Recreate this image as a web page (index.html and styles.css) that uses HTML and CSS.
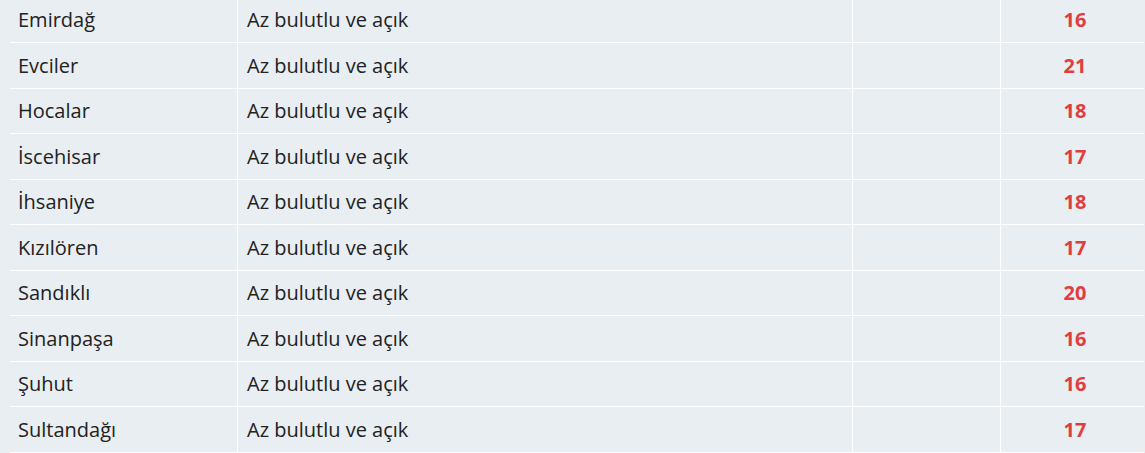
FILE: index.html
```html
<!DOCTYPE html>
<html lang="tr">
<head>
<meta charset="utf-8">
<link rel="stylesheet" href="styles.css">
</head>
<body>
<div class="wrap">
<table class="weather">
<tbody>
<tr><td class="c-name">Emirdağ</td><td class="c-desc">Az bulutlu ve açık</td><td class="c-empty"></td><td class="c-temp">16</td></tr>
<tr><td class="c-name">Evciler</td><td class="c-desc">Az bulutlu ve açık</td><td class="c-empty"></td><td class="c-temp">21</td></tr>
<tr><td class="c-name">Hocalar</td><td class="c-desc">Az bulutlu ve açık</td><td class="c-empty"></td><td class="c-temp">18</td></tr>
<tr><td class="c-name">İscehisar</td><td class="c-desc">Az bulutlu ve açık</td><td class="c-empty"></td><td class="c-temp">17</td></tr>
<tr><td class="c-name">İhsaniye</td><td class="c-desc">Az bulutlu ve açık</td><td class="c-empty"></td><td class="c-temp">18</td></tr>
<tr><td class="c-name">Kızılören</td><td class="c-desc">Az bulutlu ve açık</td><td class="c-empty"></td><td class="c-temp">17</td></tr>
<tr><td class="c-name">Sandıklı</td><td class="c-desc">Az bulutlu ve açık</td><td class="c-empty"></td><td class="c-temp">20</td></tr>
<tr><td class="c-name">Sinanpaşa</td><td class="c-desc">Az bulutlu ve açık</td><td class="c-empty"></td><td class="c-temp">16</td></tr>
<tr><td class="c-name">Şuhut</td><td class="c-desc">Az bulutlu ve açık</td><td class="c-empty"></td><td class="c-temp">16</td></tr>
<tr><td class="c-name">Sultandağı</td><td class="c-desc">Az bulutlu ve açık</td><td class="c-empty"></td><td class="c-temp">17</td></tr>
</tbody>
</table>
</div>
</body>
</html>
```
FILE: styles.css
```css
html, body {
  margin: 0;
  padding: 0;
  background: #e8eef1;
  overflow: hidden;
}
.wrap {
  padding: 0 1px 0 10px;
  margin-top: -2.5px;
}
.weather {
  width: 100%;
  border-collapse: separate;
  border-spacing: 0;
  font-family: "Open Sans", "Noto Sans", sans-serif;
  font-size: 20px;
  color: #222;
  table-layout: fixed;
}
.weather td {
  height: 45.5px;
  padding: 0 0 0 8px;
  border-bottom: 1px solid #fff;
  vertical-align: middle;
  box-sizing: border-box;
}
.weather td.c-name { width: 228px; border-right: 1px solid #fff; }
.weather td.c-desc { width: 615px; border-right: 1px solid #fff; padding-left: 9px; }
.weather td.c-empty { width: 148px; border-right: 1px solid #fff; }
.weather td.c-temp {
  text-align: center;
  padding: 0 0 0 5px;
  font-weight: 700;
  color: #e03e3e;
}
```
